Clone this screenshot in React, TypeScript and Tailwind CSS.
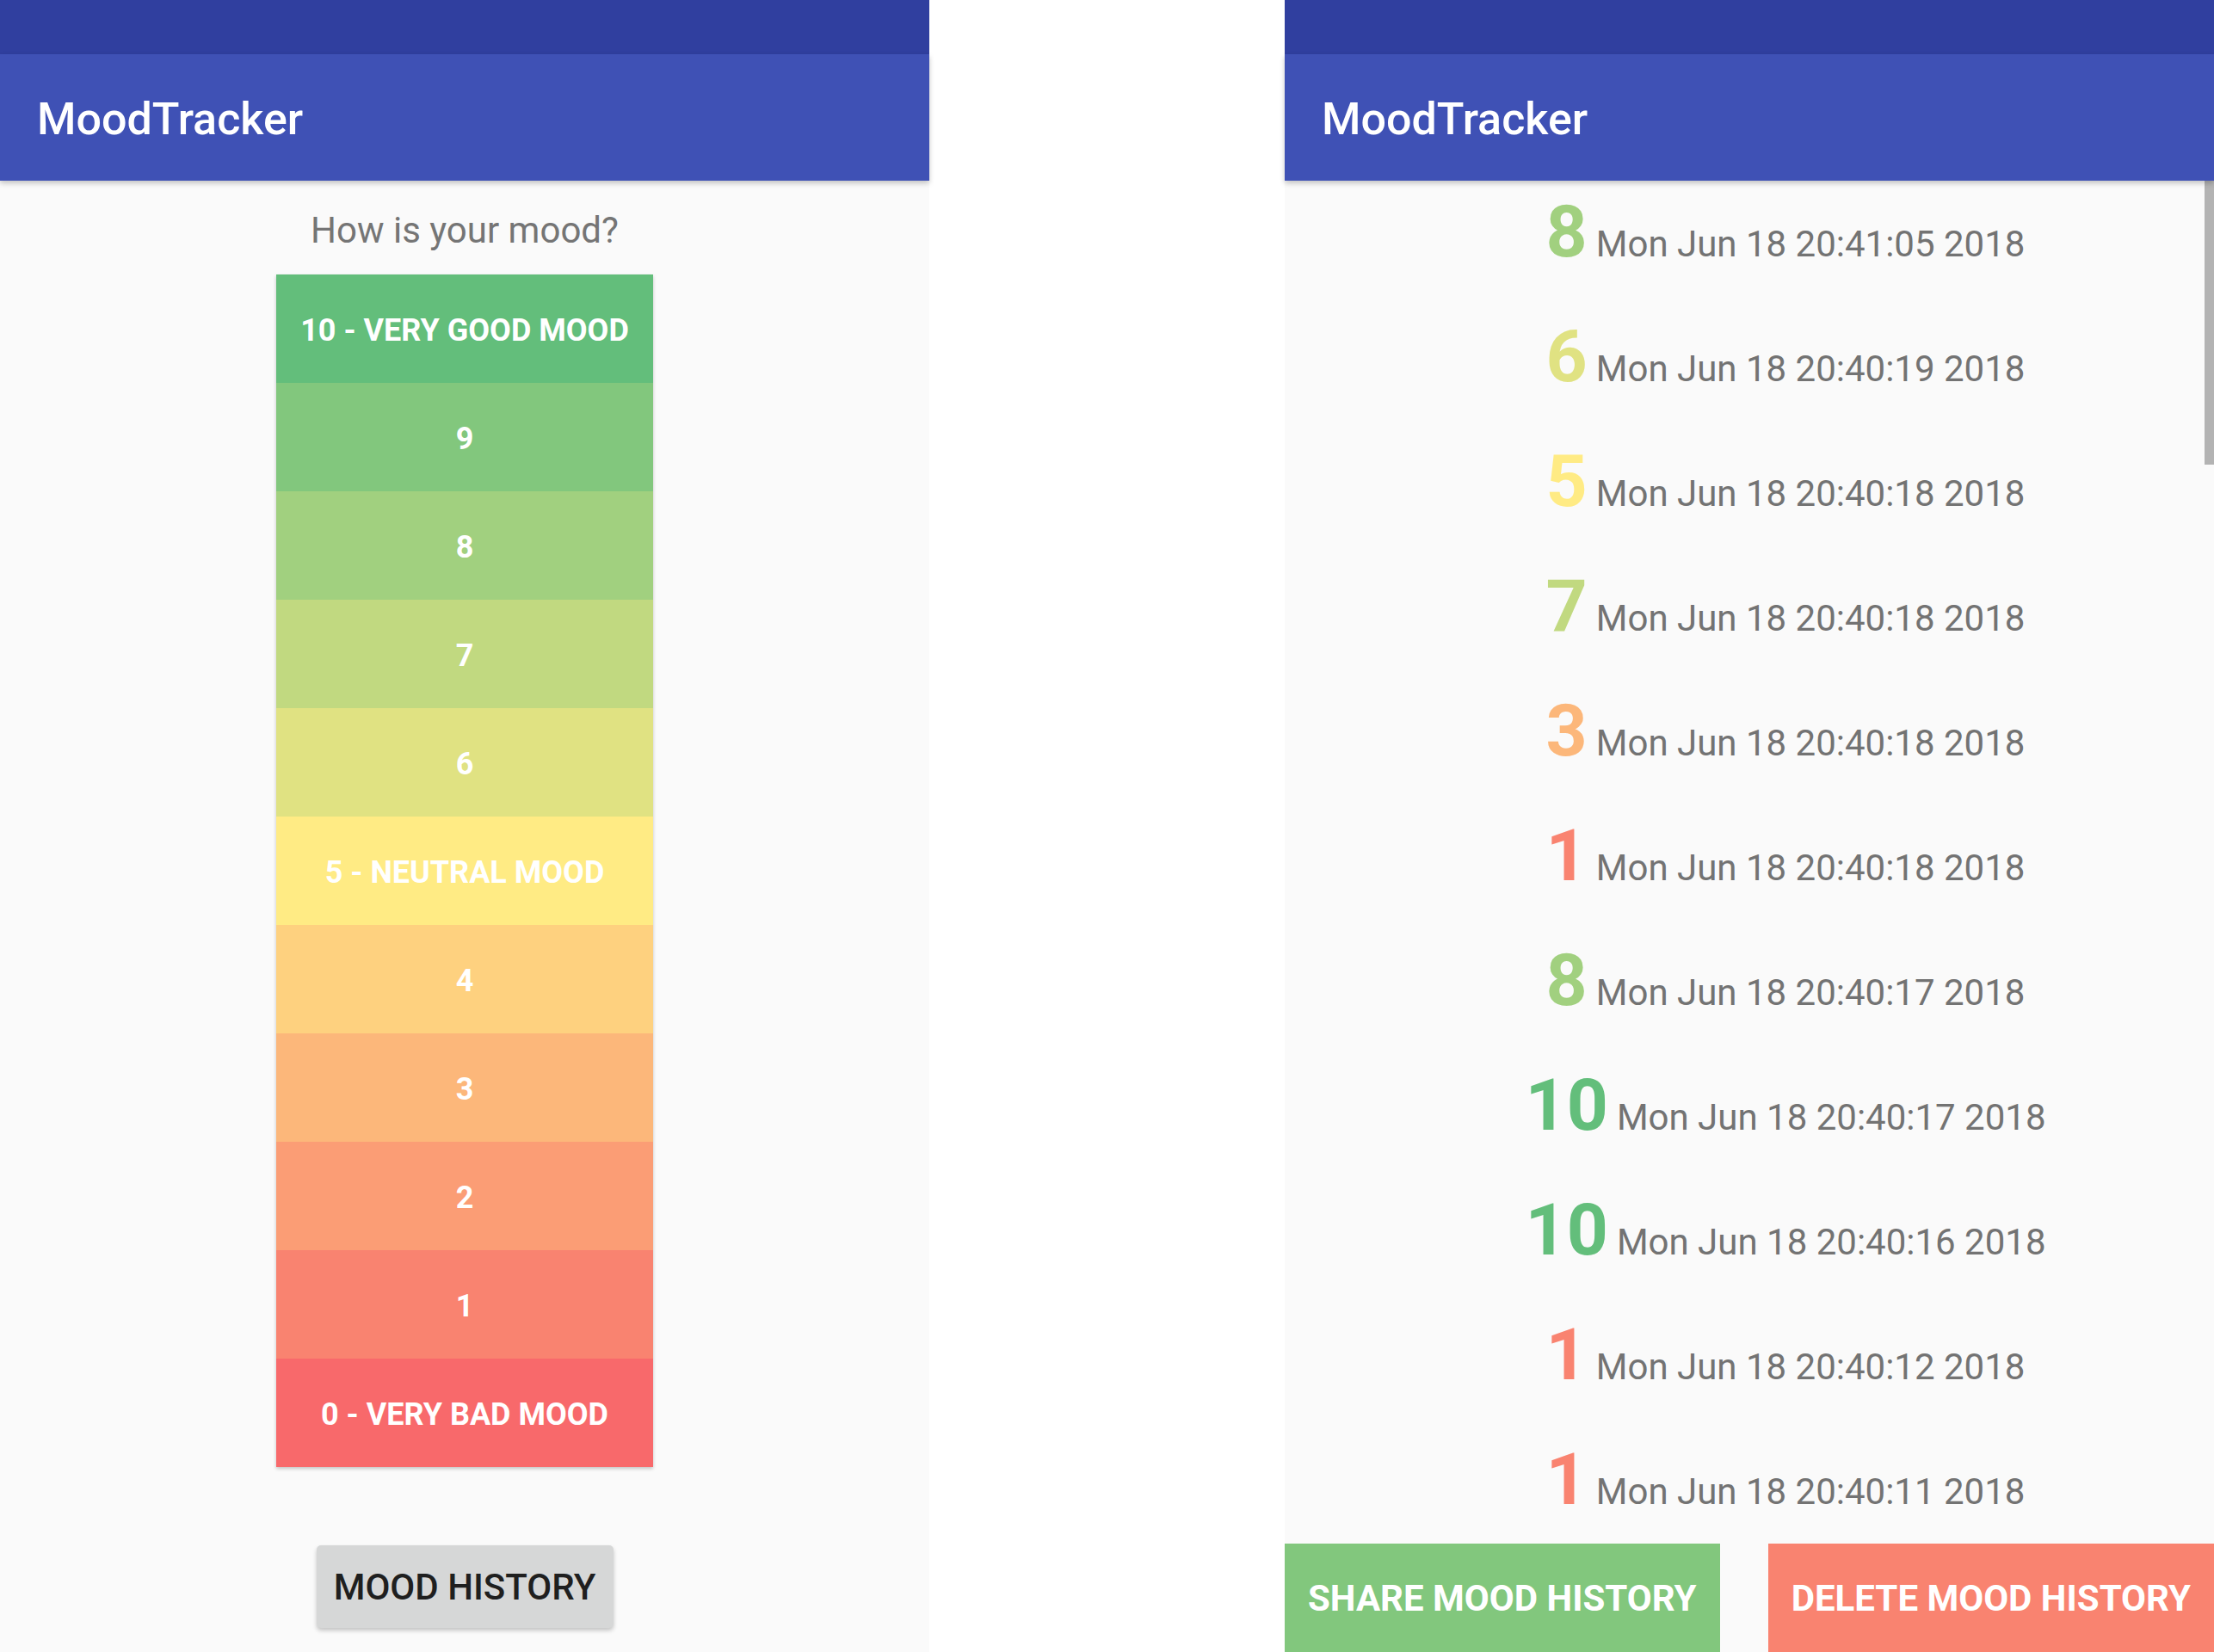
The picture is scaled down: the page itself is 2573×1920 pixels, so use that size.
import React from "react";

const COLORS: Record<number, string> = {
  0: "#F8696B",
  1: "#F98370",
  2: "#FB9D75",
  3: "#FCB77A",
  4: "#FED17F",
  5: "#FFEB84",
  6: "#E0E282",
  7: "#C1D980",
  8: "#A1D07F",
  9: "#82C77D",
  10: "#63BE7B",
};

const moods: { v: number; label: string }[] = [
  { v: 10, label: "10 - VERY GOOD MOOD" },
  { v: 9, label: "9" },
  { v: 8, label: "8" },
  { v: 7, label: "7" },
  { v: 6, label: "6" },
  { v: 5, label: "5 - NEUTRAL MOOD" },
  { v: 4, label: "4" },
  { v: 3, label: "3" },
  { v: 2, label: "2" },
  { v: 1, label: "1" },
  { v: 0, label: "0 - VERY BAD MOOD" },
];

const history: { v: number; d: string }[] = [
  { v: 8, d: "Mon Jun 18 20:41:05 2018" },
  { v: 6, d: "Mon Jun 18 20:40:19 2018" },
  { v: 5, d: "Mon Jun 18 20:40:18 2018" },
  { v: 7, d: "Mon Jun 18 20:40:18 2018" },
  { v: 3, d: "Mon Jun 18 20:40:18 2018" },
  { v: 1, d: "Mon Jun 18 20:40:18 2018" },
  { v: 8, d: "Mon Jun 18 20:40:17 2018" },
  { v: 10, d: "Mon Jun 18 20:40:17 2018" },
  { v: 10, d: "Mon Jun 18 20:40:16 2018" },
  { v: 1, d: "Mon Jun 18 20:40:12 2018" },
  { v: 1, d: "Mon Jun 18 20:40:11 2018" },
];

function Header() {
  return (
    <>
      <div className="h-[63px] bg-[#303F9F] shrink-0" />
      <div className="relative z-10 h-[147px] shrink-0 bg-[#3F51B5] flex items-center pl-[43px] pt-[5px] shadow-[0_3px_6px_rgba(0,0,0,0.22)]">
        <span className="text-white text-[52px] font-medium leading-none">MoodTracker</span>
      </div>
    </>
  );
}

function MainScreen() {
  return (
    <div className="w-[1080px] h-[1920px] flex flex-col bg-[#fafafa] shrink-0">
      <Header />
      <div className="flex-1 flex flex-col items-center">
        <div className="mt-[30px] text-[42px] leading-[56px] text-[#757575]">How is your mood?</div>
        <div className="mt-[23px] w-[438px] flex flex-col shadow-[0_2px_4px_rgba(0,0,0,0.22)]">
          {moods.map((m) => (
            <div
              key={m.v}
              className="h-[126px] pt-[3px] flex items-center justify-center text-white font-bold text-[36px] leading-none"
              style={{ backgroundColor: COLORS[m.v] }}
            >
              {m.label}
            </div>
          ))}
        </div>
        <div className="mt-[91px] w-[345px] h-[96px] pt-[2px] rounded-[5px] bg-[#d6d7d7] flex items-center justify-center text-[42px] font-medium text-[#1f1f1f] leading-none shadow-[0_3px_5px_rgba(0,0,0,0.22)]">
          MOOD HISTORY
        </div>
      </div>
    </div>
  );
}

function HistoryScreen() {
  return (
    <div className="w-[1080px] h-[1920px] flex flex-col bg-[#fafafa] shrink-0">
      <Header />
      <div className="relative flex-1 flex flex-col overflow-hidden">
        <div className="absolute right-0 top-0 w-[11px] h-[330px] bg-[#b3b3b3]" />
        <div className="flex-1 overflow-hidden flex flex-col pt-[18px] pl-[84px]">
          {history.map((h, i) => (
            <div key={i} className="h-[145px] shrink-0 flex items-baseline justify-center">
              <span className="text-[84px] leading-[84px] font-bold" style={{ color: COLORS[h.v] }}>
                {h.v}
              </span>
              <span className="ml-[10px] text-[42px] leading-[56px] text-[#737373]">{h.d}</span>
            </div>
          ))}
        </div>
        <div className="h-[126px] shrink-0 flex justify-between">
          <div className="h-full px-[27px] pt-[2px] flex items-center bg-[#82C77D] text-white font-bold text-[42px] leading-none">
            SHARE MOOD HISTORY
          </div>
          <div className="h-full px-[27px] pt-[2px] flex items-center bg-[#F98370] text-white font-bold text-[42px] leading-none">
            DELETE MOOD HISTORY
          </div>
        </div>
      </div>
    </div>
  );
}

export default function App() {
  return (
    <div className="w-[2573px] h-[1920px] bg-white flex justify-between overflow-hidden font-[family-name:Roboto,sans-serif]">
      <MainScreen />
      <HistoryScreen />
    </div>
  );
}
